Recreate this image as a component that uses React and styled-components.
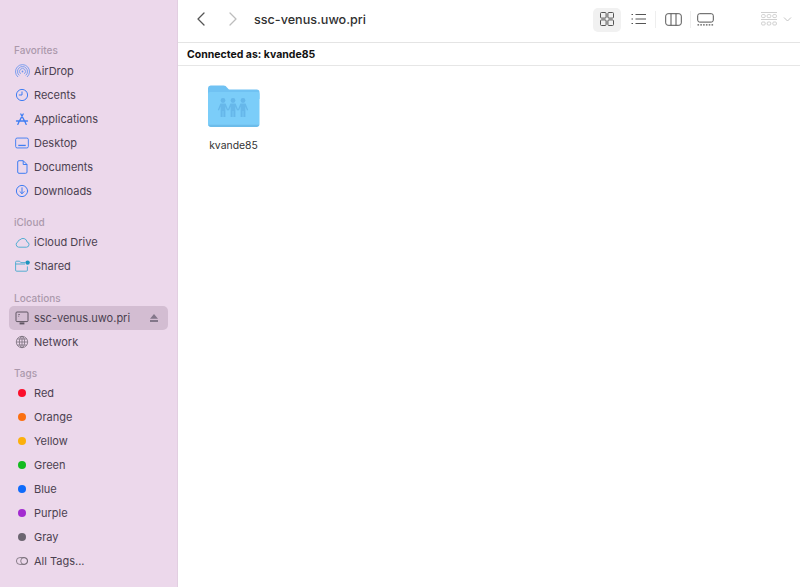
import React from 'react'
import styled, { createGlobalStyle } from 'styled-components'

const GlobalStyle = createGlobalStyle`
  html, body { margin: 0; padding: 0; background: #fff; }
  body { font-family: Inter, "Liberation Sans", sans-serif; }
`

const Window = styled.div`
  display: flex;
  width: 800px;
  height: 587px;
  overflow: hidden;
`
const Sidebar = styled.aside`
  width: 178px;
  flex: none;
  box-sizing: border-box;
  padding: 43px 9px 0 9px;
  background: #ecd8eb;
  border-right: 1px solid #e2cfe1;
`
const Group = styled.div`
  margin-bottom: ${p => p.$after ?? 12}px;
`
const GroupTitle = styled.div`
  height: 16px;
  line-height: ${p => (p.$high ? 14 : 16)}px;
  padding-left: 5px;
  font-size: 10px;
  font-weight: 500;
  color: #ab98ab;
`
const Row = styled.div`
  display: flex;
  align-items: center;
  height: 24px;
  border-radius: 5px;
  background: ${p => (p.$selected ? '#d3bdd2' : 'transparent')};
  font-size: 11px;
  color: #4b4150;
`
const IconSlot = styled.span`
  width: 18px;
  height: 16px;
  margin: 0 3px 0 4px;
  display: flex;
  align-items: center;
  justify-content: center;
  flex: none;
`
const Label = styled.span`
  flex: 1;
  white-space: nowrap;
`
const TagDot = styled.span`
  width: 8px;
  height: 8px;
  border-radius: 50%;
  background: ${p => p.$color};
`
const Eject = styled.svg`
  width: 8px;
  height: 8px;
  margin-right: 10px;
`
const Main = styled.main`
  flex: 1;
  display: flex;
  flex-direction: column;
  min-width: 0;
`
const Toolbar = styled.header`
  height: 43px;
  box-sizing: border-box;
  flex: none;
  display: flex;
  align-items: center;
  border-bottom: 1px solid #e4e4e4;
  padding: 0 1px 2px 17px;
`
const NavButton = styled.svg`
  width: 12px;
  height: 16px;
  margin: 0 ${p => p.$gap}px 2px 0;
`
const PathTitle = styled.h1`
  margin: 0 0 2px 0;
  font-size: 12.6px;
  font-weight: 500;
  color: #303030;
  flex: 1;
`
const ViewButton = styled.div`
  width: 28px;
  height: 24px;
  box-sizing: border-box;
  padding-bottom: 2px;
  border-radius: 5px;
  display: flex;
  align-items: center;
  justify-content: center;
  margin-right: ${p => p.$gap || 0}px;
  background: ${p => (p.$active ? '#f1f1f1' : 'transparent')};
`
const Divider = styled.span`
  width: 1px;
  height: 17px;
  margin-bottom: 2px;
  background: #eeeeee;
  margin-right: ${p => p.$gap || 0}px;
`
const GroupByBox = styled.svg`
  width: 16px;
  height: 15px;
  margin-bottom: 1px;
`
const StatusBar = styled.div`
  height: 22px;
  flex: none;
  display: flex;
  align-items: center;
  padding-left: 9px;
  border-bottom: 1px solid #e6e6e6;
  font-size: 10.5px;
  font-weight: 700;
  color: #111;
`
const Content = styled.section`
  flex: 1;
  padding: 19px 0 0 19px;
`
const FolderItem = styled.div`
  width: 74px;
  display: flex;
  flex-direction: column;
  align-items: center;
`
const FolderName = styled.div`
  margin-top: 11px;
  margin-right: 1px;
  font-size: 10.4px;
  color: #333;
`

const blue = '#3f7df3'

const AirDropIcon = () => (
  <svg width="15" height="15" viewBox="0 0 15 15" fill="none" stroke="#6f97ee" strokeWidth="0.9">
    <path d="M3 13A7 7 0 1 1 12 13" />
    <path d="M4.3 11.4A5 5 0 1 1 10.7 11.4" />
    <path d="M5.6 9.8A3 3 0 1 1 9.4 9.8" />
    <circle cx="7.5" cy="7.5" r="0.9" fill="#6f97ee" stroke="none" />
  </svg>
)
const ClockIcon = () => (
  <svg width="14" height="14" viewBox="0 0 14 14" fill="none" stroke={blue} strokeWidth="1">
    <circle cx="7" cy="7" r="5.6" />
    <path d="M7 3.5V7H3.8" />
  </svg>
)
const AppsIcon = () => (
  <svg width="14" height="14" viewBox="0 0 14 14" fill="none" stroke={blue} strokeWidth="1.3" strokeLinecap="round">
    <path d="M5.8 2L10.3 10.4M8.2 2L3.7 10.4M1.5 9H12.5M2.8 12.4L3.7 10.4M11.2 12.4L10.3 10.4" />
  </svg>
)
const DesktopIcon = () => (
  <svg width="14" height="12" viewBox="0 0 15 12" fill="none" stroke={blue} strokeWidth="1">
    <rect x="0.7" y="0.7" width="13.6" height="10.6" rx="1.6" />
    <path d="M3.5 8.6H11.5" strokeWidth="1.4" />
  </svg>
)
const DocIcon = () => (
  <svg width="11" height="14" viewBox="0 0 11 14" fill="none" stroke={blue} strokeWidth="1" strokeLinejoin="round">
    <path d="M2 .7H6.2L10 4.5V12A1.3 1.3 0 0 1 8.7 13.3H2A1.3 1.3 0 0 1 .7 12V2A1.3 1.3 0 0 1 2 .7Z" />
    <path d="M6.2 .7V4.5H10" />
  </svg>
)
const DownloadIcon = () => (
  <svg width="14" height="14" viewBox="0 0 14 14" fill="none" stroke={blue} strokeWidth="1" strokeLinecap="round" strokeLinejoin="round">
    <circle cx="7" cy="7" r="5.6" />
    <path d="M7 3.8V9.6M4.9 7.6L7 9.7L9.1 7.6" />
  </svg>
)
const CloudIcon = () => (
  <svg width="15" height="11" viewBox="0 0 15 11" fill="none" stroke="#45a9cf" strokeWidth="0.9" strokeLinejoin="round">
    <path d="M3.6 10.2H11.6A2.7 2.7 0 0 0 12 4.9A4 4 0 0 0 5 2.8A2.2 2.2 0 0 0 3 4.8A2.8 2.8 0 0 0 3.6 10.2Z" />
  </svg>
)
const SharedIcon = () => (
  <svg width="15" height="12" viewBox="0 0 15 12" fill="none" stroke="#45a9cf" strokeWidth="0.9" strokeLinejoin="round">
    <path d="M.6 2.2A1 1 0 0 1 1.6 1.2H4.6L5.8 2.6H10M.6 4H10M.6 2.2V10.2A1 1 0 0 0 1.6 11.2H11.4A1 1 0 0 0 12.4 10.2V6.4" />
    <circle cx="12.6" cy="2.6" r="2.2" fill="#1c93bd" stroke="none" />
  </svg>
)
const ServerIcon = () => (
  <svg width="14" height="14" viewBox="0 0 14 14" fill="none" stroke="#5f5562" strokeWidth="1">
    <rect x="1" y="1" width="12" height="9.6" rx="1" />
    <path d="M3.2 3.5H5M3.2 5.2H4.2" strokeWidth="0.7" />
    <path d="M4.6 12.4H9.4" strokeWidth="2" />
  </svg>
)
const GlobeIcon = () => (
  <svg width="14" height="14" viewBox="0 0 14 14" fill="none" stroke="#7a707c" strokeWidth="0.8">
    <circle cx="7" cy="7" r="5.7" />
    <ellipse cx="7" cy="7" rx="2.6" ry="5.7" />
    <path d="M1.3 7H12.7M2.2 4H11.8M2.2 10H11.8M7 1.3V12.7" />
  </svg>
)
const AllTagsIcon = () => (
  <svg width="12" height="8" viewBox="0 0 14 9" fill="none" stroke="#6e6570" strokeWidth="0.9">
    <rect x="0.5" y="0.5" width="13" height="8" rx="4" />
    <circle cx="9.5" cy="4.5" r="4" />
  </svg>
)

const GridIcon = () => (
  <svg width="14" height="14" viewBox="0 0 14 14" fill="none" stroke="#555" strokeWidth="1">
    <rect x=".5" y=".5" width="5.6" height="5.6" rx="1" />
    <rect x="7.9" y=".5" width="5.6" height="5.6" rx="1" />
    <rect x=".5" y="7.9" width="5.6" height="5.6" rx="1" />
    <rect x="7.9" y="7.9" width="5.6" height="5.6" rx="1" />
  </svg>
)
const ListIcon = () => (
  <svg width="15" height="12" viewBox="0 0 15 12" fill="none" stroke="#555" strokeWidth="1">
    <path d="M4.5 1.5H15M4.5 6H15M4.5 10.5H15" />
    <path d="M0.5 1.5H2M0.5 6H2M0.5 10.5H2" strokeWidth="1.2" />
  </svg>
)
const ColumnsIcon = () => (
  <svg width="17" height="13" viewBox="0 0 17 13" fill="none" stroke="#555" strokeWidth="1">
    <rect x="0.7" y="0.7" width="15.6" height="11.6" rx="2.4" />
    <path d="M6 .7V12.3M11 .7V12.3" />
  </svg>
)
const GalleryIcon = () => (
  <svg width="17" height="13" viewBox="0 0 17 13" fill="none" stroke="#555" strokeWidth="1">
    <rect x="0.7" y="0.7" width="15.6" height="8.4" rx="2" />
    <path d="M.5 11.8H16.5" strokeDasharray="1.6 1.2" strokeWidth="1.3" />
  </svg>
)
const GroupByIcon = () => (
  <GroupByBox viewBox="0 0 16 15" fill="none" stroke="#c4c4c4" strokeWidth="0.8">
    <path d="M0 .5H16M0 7.5H16" />
    <rect x="0.6" y="2.6" width="3.6" height="3" rx="1" />
    <rect x="6.2" y="2.6" width="3.6" height="3" rx="1" />
    <rect x="11.8" y="2.6" width="3.6" height="3" rx="1" />
    <rect x="0.6" y="10" width="3.6" height="3" rx="1" />
    <rect x="6.2" y="10" width="3.6" height="3" rx="1" />
    <rect x="11.8" y="10" width="3.6" height="3" rx="1" />
  </GroupByBox>
)
const Person = ({ x }) => (
  <g transform={`translate(${x} 0)`} fill="#66b7ea">
    <circle cx="0" cy="15.5" r="2.4" />
    <path d="M-2.6 18.5H2.6L5.2 25L4 25.6L2.4 21.5V32H.4V26H-.4V32H-2.4V21.5L-4 25.6L-5.2 25Z" />
  </g>
)
const SharedFolder = () => (
  <svg width="52" height="43" viewBox="0 0 52 43">
    <path d="M0 3A2.6 2.6 0 0 1 2.6 .5H15.5C17.5.5 18 1.4 19 2.4L20.2 3.8C20.8 4.4 21.4 4.6 22.4 4.6H48.8A2.8 2.8 0 0 1 51.5 7.4V14H0Z" fill="#70c2f3" />
    <path d="M0 9A2 2 0 0 1 2 7H49.5A2 2 0 0 1 51.5 9V38.8A2.8 2.8 0 0 1 48.7 41.6H2.8A2.8 2.8 0 0 1 0 38.8Z" fill="#7bcdf9" />
    <path d="M0 39.8H51.5A2.8 2.8 0 0 1 48.7 41.9H2.8A2.8 2.8 0 0 1 0 39.8Z" fill="#6cbcea" />
    <Person x={15} />
    <Person x={25} />
    <Person x={35} />
  </svg>
)

const favorites = [
  ['AirDrop', <AirDropIcon />],
  ['Recents', <ClockIcon />],
  ['Applications', <AppsIcon />],
  ['Desktop', <DesktopIcon />],
  ['Documents', <DocIcon />],
  ['Downloads', <DownloadIcon />],
]
const tags = [
  ['Red', '#fb0f2c'],
  ['Orange', '#fb7011'],
  ['Yellow', '#fcb00c'],
  ['Green', '#13bb1f'],
  ['Blue', '#0f6bfb'],
  ['Purple', '#a32bd0'],
  ['Gray', '#6c6571'],
]

const SideRow = ({ icon, children, selected, trailing }) => (
  <Row $selected={selected}>
    <IconSlot>{icon}</IconSlot>
    <Label>{children}</Label>
    {trailing}
  </Row>
)

export default function App() {
  return (
    <Window>
      <GlobalStyle />
      <Sidebar>
        <Group $after={11}>
          <GroupTitle $high>Favorites</GroupTitle>
          {favorites.map(([name, icon]) => (
            <SideRow key={name} icon={icon}>{name}</SideRow>
          ))}
        </Group>
        <Group>
          <GroupTitle>iCloud</GroupTitle>
          <SideRow icon={<CloudIcon />}>iCloud Drive</SideRow>
          <SideRow icon={<SharedIcon />}>Shared</SideRow>
        </Group>
        <Group $after={11}>
          <GroupTitle>Locations</GroupTitle>
          <SideRow
            selected
            icon={<ServerIcon />}
            trailing={
              <Eject viewBox="0 0 10 10">
                <path d="M5 0L10 6H0Z M0 7.6H10V10H0Z" fill="#83778a" />
              </Eject>
            }
          >
            ssc-venus.uwo.pri
          </SideRow>
          <SideRow icon={<GlobeIcon />}>Network</SideRow>
        </Group>
        <Group>
          <GroupTitle>Tags</GroupTitle>
          {tags.map(([name, color]) => (
            <SideRow key={name} icon={<TagDot $color={color} />}>{name}</SideRow>
          ))}
          <SideRow icon={<AllTagsIcon />}>All Tags...</SideRow>
        </Group>
      </Sidebar>
      <Main>
        <Toolbar>
          <NavButton $gap={20} viewBox="0 0 12 16" fill="none" stroke="#555" strokeWidth="1.3" strokeLinecap="round" strokeLinejoin="round">
            <path d="M9 2L3 8L9 14" />
          </NavButton>
          <NavButton $gap={15} viewBox="0 0 12 16" fill="none" stroke="#bdbdbd" strokeWidth="1.3" strokeLinecap="round" strokeLinejoin="round">
            <path d="M3 2L9 8L3 14" />
          </NavButton>
          <PathTitle>ssc-venus.uwo.pri</PathTitle>
          <ViewButton $active $gap={3}><GridIcon /></ViewButton>
          <ViewButton $gap={3}><ListIcon /></ViewButton>
          <Divider $gap={3} />
          <ViewButton $gap={3}><ColumnsIcon /></ViewButton>
          <Divider />
          <ViewButton $gap={42}><GalleryIcon /></ViewButton>
          <GroupByIcon />
          <svg width="22" height="14" viewBox="0 0 22 14" fill="none" stroke="#c4c4c4" strokeWidth="1">
            <path d="M7 4.5L10.5 8L14 4.5" />
          </svg>
        </Toolbar>
        <StatusBar>Connected as: kvande85</StatusBar>
        <Content>
          <FolderItem>
            <SharedFolder />
            <FolderName>kvande85</FolderName>
          </FolderItem>
        </Content>
      </Main>
    </Window>
  )
}
